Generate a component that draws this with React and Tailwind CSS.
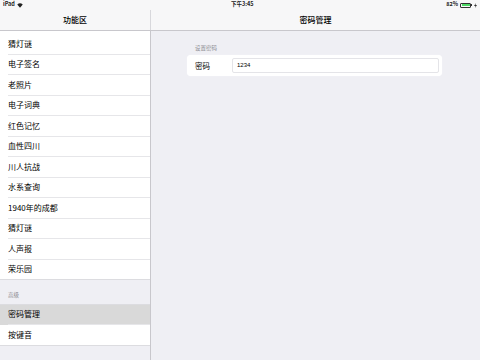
import React from 'react';

const items = ['猜灯谜', '电子签名', '老照片', '电子词典', '红色记忆', '血性四川', '川人抗战', '水系查询', '1940年的成都', '猜灯谜', '人声报', '荣乐园'];

const font = { fontFamily: '"Noto Sans CJK SC", "Liberation Sans", sans-serif' };

const Row = ({ label, last, selected }) => (
  <div className={`h-[20.5px] ${selected ? 'bg-[#d9d9d9]' : 'bg-white'} ${last ? 'border-b border-[#dcdce0]' : 'pl-[8px]'}`}>
    <div className={`h-full flex items-center text-[8px] text-black ${last ? 'pl-[8px]' : 'border-b border-[#e6e6e9]'}`}>
      {label}
    </div>
  </div>
);

const WifiIcon = () => (
  <svg width="6" height="5" viewBox="0 0 12 10" className="ml-[2px]">
    <path d="M6 9.5 L0.5 3.2 A8 8 0 0 1 11.5 3.2 Z" fill="#222" />
  </svg>
);

export default function App() {
  return (
    <div className="w-[480px] h-[360px] overflow-hidden flex flex-col bg-[#efeff4]" style={font}>
      {/* top bars */}
      <div className="h-[31px] bg-[#f7f7f8] border-b border-[#c8c7cc] flex flex-col shrink-0 relative">
        <div className="h-[10px] flex items-center justify-between px-[3px] text-[5.5px] font-semibold text-[#222] leading-none">
          <div className="flex items-center">iPad<WifiIcon /></div>
          <div className="absolute left-[231px] top-[2px]">下午3:45</div>
          <div className="flex items-center gap-[2px]">
            <span>82%</span>
            <div className="w-[11px] h-[5px] border border-[#333] rounded-[1px] p-[0.5px] flex">
              <div className="w-[8px] h-full bg-[#4cd964]" />
            </div>
            <div className="w-[1px] h-[2px] bg-[#333] -ml-[2px]" />
            <svg width="3" height="5" viewBox="0 0 6 10">
              <path d="M4 0 L0 6 H3 L2 10 L6 4 H3 Z" fill="#333" />
            </svg>
          </div>
        </div>
        <div className="flex-1 flex">
          <div className="w-[151px] border-r border-[#d8d8dc] flex items-center justify-center text-[8px] font-medium text-black">功能区</div>
          <div className="flex-1 flex items-center justify-center text-[8px] font-medium text-black">密码管理</div>
        </div>
      </div>

      <div className="flex-1 flex min-h-0">
        {/* sidebar */}
        <div className="w-[151px] border-r border-[#c8c7cc] flex flex-col shrink-0">
          <div className="bg-white pt-[3px]">
            {items.map((t, i) => (
              <Row key={i} label={t} last={i === items.length - 1} />
            ))}
          </div>
          <div className="h-[23.5px] flex items-end pl-[8px] pb-[4px] text-[5.5px] text-[#8e8e93]">高级</div>
          <div className="border-t border-[#dcdce0]">
            <Row label="密码管理" selected />
            <Row label="按键音" last />
          </div>
        </div>

        {/* content */}
        <div className="flex-1 pl-[36px] pr-[38px] pt-[13px]">
          <div className="pl-[8px] text-[5.5px] text-[#8e8e93] mb-[3px]">设置密码</div>
          <div className="h-[21px] bg-white rounded-[4px] flex items-center pl-[8px] pr-[3px] shadow-[0_0_1px_rgba(255,255,255,1)]">
            <div className="w-[37px] text-[7.5px] text-black">密码</div>
            <div className="flex-1 h-[15px] border border-[#e4e4e8] rounded-[2px] flex items-center pl-[4px] text-[6px] text-black" style={{ fontFamily: '"Liberation Sans", sans-serif' }}>
              1234
            </div>
          </div>
        </div>
      </div>
    </div>
  );
}
